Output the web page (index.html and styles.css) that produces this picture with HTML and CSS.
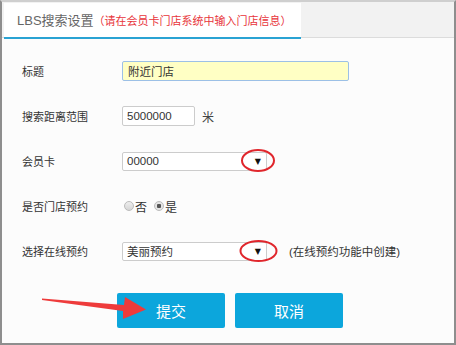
FILE: index.html
```html
<!DOCTYPE html>
<html lang="zh-CN">
<head>
  <meta charset="UTF-8">
  <meta name="viewport" content="width=device-width, initial-scale=1.0">
  <title>LBS搜索设置</title>
  <link rel="stylesheet" href="styles.css">
</head>
<body>
  <div class="panel">
    <div class="tab-bar">
      <div class="tab">LBS搜索设置<span class="tab-tip">（请在会员卡门店系统中输入门店信息）</span></div>
    </div>

    <form class="lbs-form">
      <div class="form-row">
        <label class="form-label">标题</label>
        <div class="form-field">
          <input type="text" class="text-input title-input" value="附近门店">
        </div>
      </div>

      <div class="form-row">
        <label class="form-label">搜索距离范围</label>
        <div class="form-field">
          <input type="text" class="text-input range-input" value="5000000">
          <span class="unit">米</span>
        </div>
      </div>

      <div class="form-row">
        <label class="form-label">会员卡</label>
        <div class="form-field">
          <div class="select-box"><span>00000</span><span class="select-arrow">▼</span></div>
        </div>
      </div>

      <div class="form-row">
        <label class="form-label">是否门店预约</label>
        <div class="form-field radios">
          <span class="radio"></span><span class="radio-text">否</span>
          <span class="radio checked"></span><span class="radio-text">是</span>
        </div>
      </div>

      <div class="form-row">
        <label class="form-label">选择在线预约</label>
        <div class="form-field">
          <div class="select-box"><span>美丽预约</span><span class="select-arrow">▼</span></div>
          <span class="note">(在线预约功能中创建)</span>
        </div>
      </div>

      <div class="form-actions">
        <button type="button" class="btn">提交</button>
        <button type="button" class="btn">取消</button>
      </div>
    </form>

    <!-- annotation marks drawn over the screenshot -->
    <svg class="marks" width="456" height="345" viewBox="0 0 456 345">
      <ellipse cx="258" cy="160.5" rx="16" ry="10.5" fill="none" stroke="#e0262c" stroke-width="2"/>
      <ellipse cx="258.5" cy="251" rx="18" ry="10" fill="none" stroke="#e0262c" stroke-width="2"/>
      <polygon points="42,298.5 124,305 125,297 146,309.5 123,319 123,311 42,300" fill="#ee3b3b"/>
    </svg>
  </div>
</body>
</html>
```

FILE: styles.css
```css
* {
  box-sizing: border-box;
}

body {
  margin: 0;
  font-family: "Liberation Sans", "Noto Sans CJK SC", sans-serif;
  background-color: #fff;
}

.panel {
  position: relative;
  width: 456px;
  height: 345px;
  border: 2px solid #8e8e8e;
  border-top-color: #cfcfcf;
  background-color: #fcfcfc;
}

.tab-bar {
  display: flex;
  height: 36px;
  padding: 1px 0 0 2px;
  background-color: #f2f2f2;
  border-bottom: 1px solid #dcdcdc;
}

.tab {
  width: 297px;
  height: 36px;
  padding: 7px 0 0 13px;
  background-color: #fff;
  border-bottom: 2px solid #2aa3d3;
  font-size: 13px;
  color: #666;
}

.tab-tip {
  font-size: 11px;
  color: #e8353b;
}

.lbs-form {
  padding: 21px 0 0 20px;
}

.form-row {
  display: flex;
  align-items: center;
  height: 24px;
  margin-bottom: 21px;
}

.form-label {
  width: 100px;
  font-size: 11px;
  color: #333;
}

.form-field {
  display: flex;
  align-items: center;
}

.text-input {
  height: 20px;
  padding: 0 5px;
  font-family: "Liberation Sans", "Noto Sans CJK SC", sans-serif;
  font-size: 11.5px;
  color: #333;
  border: 1px solid #ccc;
  border-radius: 2px;
  background-color: #fff;
}

.title-input {
  width: 227px;
  background-color: #ffffc4;
  border-color: #9cc0e6;
}

.range-input {
  width: 73px;
  padding-left: 4px;
}

.unit {
  margin-left: 7px;
  font-size: 12px;
  color: #444;
}

.select-box {
  display: flex;
  justify-content: space-between;
  align-items: center;
  width: 145px;
  height: 19px;
  padding: 0 5px 0 4px;
  border: 1px solid #ccc;
  border-radius: 2px;
  background-color: #fff;
  font-size: 11.5px;
  color: #333;
}

.select-arrow {
  font-family: "DejaVu Sans", sans-serif;
  font-size: 8px;
  color: #111;
}

.radios {
  font-size: 12px;
  color: #333;
}

.radio {
  width: 10px;
  height: 10px;
  margin-left: 2px;
  border: 1px solid #bbb;
  border-radius: 50%;
  background: linear-gradient(#eee, #d5d5d5);
}

.radio.checked {
  margin-left: 7px;
  background: radial-gradient(circle, #555 0, #555 2px, #e4e4e4 2.5px);
}

.radio-text {
  margin-left: 1px;
}

.note {
  margin-left: 22px;
  font-size: 11.5px;
  color: #333;
}

.form-actions {
  display: flex;
  gap: 10px;
  padding: 9px 0 0 95px;
}

.btn {
  width: 108px;
  height: 35px;
  border: none;
  border-radius: 2px;
  background-color: #0ca6dc;
  color: #fff;
  font-family: "Noto Sans CJK SC", sans-serif;
  font-size: 15px;
  cursor: pointer;
}

.marks {
  position: absolute;
  left: -2px;
  top: -2px;
  pointer-events: none;
}
```
